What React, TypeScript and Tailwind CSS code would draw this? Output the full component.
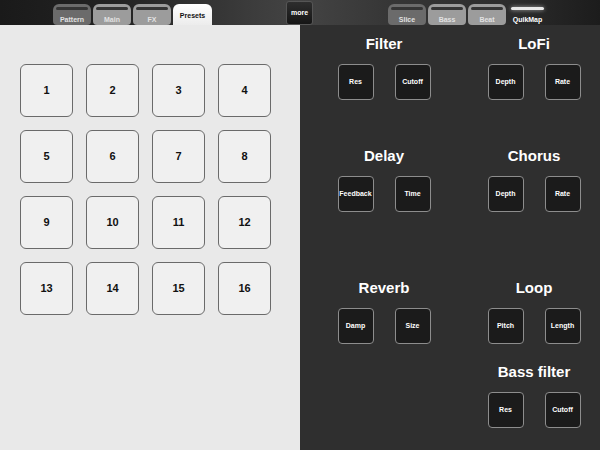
import React from 'react';

const leftTabs = [
  { label: 'Pattern', tone: 'dark' },
  { label: 'Main', tone: 'light' },
  { label: 'FX', tone: 'light' },
  { label: 'Presets', tone: 'active' },
];

const rightTabs = [
  { label: 'Slice', tone: 'dark' },
  { label: 'Bass', tone: 'light' },
  { label: 'Beat', tone: 'light' },
  { label: 'QuikMap', tone: 'active' },
];

const Tab: React.FC<{ label: string; tone: string; side: 'left' | 'right' }> = ({ label, tone, side }) => {
  if (tone === 'active' && side === 'left') {
    return (
      <div className="w-[39px] h-[21px] rounded-t-[6px] bg-[linear-gradient(180deg,#ffffff,#ececec)] flex items-end justify-center pb-[4px]">
        <span className="text-[7px] font-bold text-[#111]">{label}</span>
      </div>
    );
  }
  if (tone === 'active') {
    return (
      <div className="w-[39px] h-[21px] rounded-t-[6px] flex flex-col items-center pt-[3px]">
        <div className="w-[33px] h-[4px] rounded-full bg-[#e8e8e8] shadow-[0_0_4px_rgba(255,255,255,0.6)]" />
        <span className="mt-[5px] text-[7px] font-bold text-white">{label}</span>
      </div>
    );
  }
  const bg = tone === 'dark' ? 'bg-[#6b6b6b]' : 'bg-[#9c9c9c]';
  return (
    <div className={`w-[38px] h-[21px] rounded-t-[6px] rounded-b-[4px] ${bg} flex flex-col items-center pt-[3px]`}>
      <div className="w-[32px] h-[4px] rounded-[2px] bg-[#353535]" />
      <span className="mt-[5px] text-[7px] font-bold text-[#e2e2e2]">{label}</span>
    </div>
  );
};

const Control: React.FC<{ label: string }> = ({ label }) => (
  <div className="w-[36px] h-[36px] rounded-[4px] border border-[#8d8d8d] bg-[#1b1b1b] flex items-center justify-center">
    <span className="text-[7px] font-bold text-white">{label}</span>
  </div>
);

const Group: React.FC<{ title: string; a: string; b: string }> = ({ title, a, b }) => (
  <div className="flex flex-col items-center">
    <div className="h-[20px] leading-[20px] text-[15px] font-bold text-white">{title}</div>
    <div className="mt-[10px] flex gap-[21px]">
      <Control label={a} />
      <Control label={b} />
    </div>
  </div>
);

export default function App() {
  return (
    <div className="w-[600px] h-[450px] flex flex-col overflow-hidden font-['Liberation_Sans',Arial,sans-serif]">
      <div className="h-[25px] flex items-end pl-[53px] bg-[linear-gradient(90deg,#1a1a1a_0%,#232323_20%,#3c3c3c_42%,#444_50%,#363636_65%,#2c2c2c_85%,#1c1c1c_100%)]">
        <div className="flex gap-[2px]">
          {leftTabs.map((t) => (
            <Tab key={t.label} label={t.label} tone={t.tone} side="left" />
          ))}
        </div>
        <div className="ml-[74px] self-start w-[27px] h-[24px] mt-[1px] rounded-[3px] border border-[#555] bg-[linear-gradient(180deg,#2e2e2e,#151515)] flex items-center justify-center">
          <span className="text-[7px] font-bold text-white">more</span>
        </div>
        <div className="ml-[75px] flex gap-[2px]">
          {rightTabs.map((t) => (
            <Tab key={t.label} label={t.label} tone={t.tone} side="right" />
          ))}
        </div>
      </div>
      <div className="flex flex-1">
        <div className="w-[300px] bg-[#e9e9e9] pt-[39px] pl-[20px]">
          <div className="grid grid-cols-[53px_53px_53px_53px] gap-[13px]">
            {Array.from({ length: 16 }, (_, i) => (
              <div
                key={i}
                className="w-[53px] h-[53px] rounded-[6px] border border-[#6a6a6a] bg-[#f0f0f0] flex items-center justify-center"
              >
                <span className="text-[11px] font-bold text-[#111]">{i + 1}</span>
              </div>
            ))}
          </div>
        </div>
        <div className="flex-1 bg-[#2f2f2f] pl-[18px] pt-[9px]">
          <div className="grid grid-cols-[132px_132px] gap-x-[18px]">
            <Group title="Filter" a="Res" b="Cutoff" />
            <Group title="LoFi" a="Depth" b="Rate" />
          </div>
          <div className="mt-[46px] grid grid-cols-[132px_132px] gap-x-[18px]">
            <Group title="Delay" a="Feedback" b="Time" />
            <Group title="Chorus" a="Depth" b="Rate" />
          </div>
          <div className="mt-[66px] grid grid-cols-[132px_132px] gap-x-[18px]">
            <Group title="Reverb" a="Damp" b="Size" />
            <Group title="Loop" a="Pitch" b="Length" />
          </div>
          <div className="mt-[18px] grid grid-cols-[132px_132px] gap-x-[18px]">
            <div />
            <Group title="Bass filter" a="Res" b="Cutoff" />
          </div>
        </div>
      </div>
    </div>
  );
}
